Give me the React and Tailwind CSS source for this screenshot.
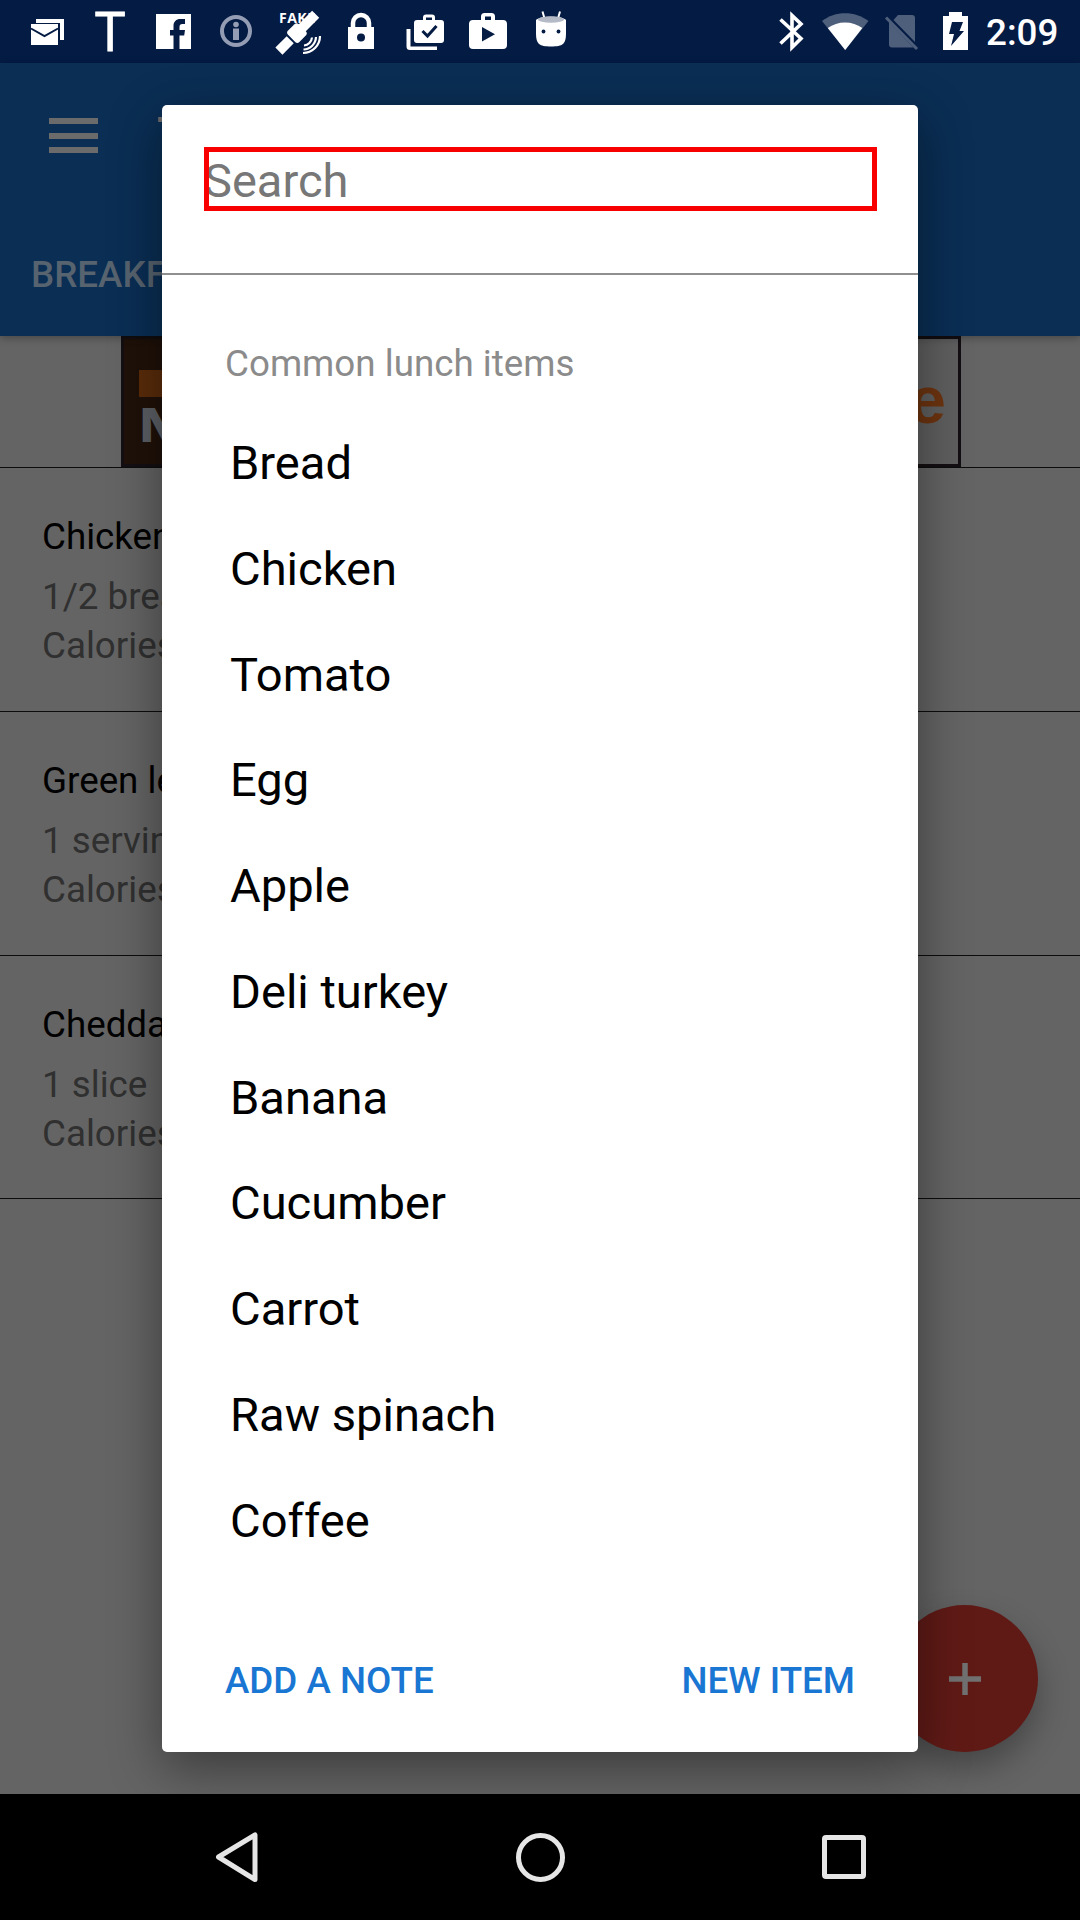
import React from "react";

const FOODS = ["Bread", "Chicken", "Tomato", "Egg", "Apple", "Deli turkey", "Banana", "Cucumber", "Carrot", "Raw spinach", "Coffee"];

const ENTRIES = [
  { name: "Chicken", amount: "1/2 breast" },
  { name: "Green leaf", amount: "1 serving" },
  { name: "Cheddar", amount: "1 slice" },
];

function Slot({ children, w = 63 }) {
  return (
    <svg width={w} height="63" viewBox={`0 0 ${w} 63`} className="shrink-0" fill="white">
      {children}
    </svg>
  );
}

function StatusBar() {
  return (
    <header className="flex h-[63px] items-center bg-[#041b44] pl-4 text-white">
      <Slot>
        <path d="M20 19h28v21h-4V23H20z" />
        <path d="M15 24h27v21H15z" />
        <path d="M15 28.500l13.500 7.500L42 28.500" fill="none" stroke="#041b44" strokeWidth="2" />
      </Slot>
      <Slot>
        <text x="31" y="51" textAnchor="middle" fontFamily="Open Sans" fontSize="54" stroke="white" strokeWidth="0.8">T</text>
      </Slot>
      <Slot>
        <path d="M14 14h35v35H37.500V35.500h4.700l.8-5.500h-5.500v-3c0-2 .8-3 3-3H43v-5h-4.500c-4.500 0-7 2.700-7 7v4H28v5.500h3.500V49H14z" />
      </Slot>
      <Slot>
        <circle cx="31" cy="31" r="14" fill="none" stroke="#949db4" strokeWidth="4" />
        <circle cx="31" cy="24.500" r="2.800" fill="#949db4" />
        <path d="M28 28.500h6v11.500h-6z" fill="#949db4" />
      </Slot>
      <Slot>
        <text x="11" y="23" fontFamily="Open Sans" fontWeight="700" fontSize="14" letterSpacing="0.5">FAKE</text>
        <g transform="rotate(-45 30 32)">
          <rect x="3" y="27" width="16" height="10" />
          <rect x="21" y="24" width="15" height="16" rx="3" />
          <rect x="35" y="27" width="20" height="10" />
        </g>
        <g fill="none" stroke="white" strokeWidth="2.200">
          <path d="M36 45.500a9 9 0 0 0 8-8" />
          <path d="M35.500 49.500a13 13 0 0 0 12.500-12.500" />
          <path d="M35 53a17 17 0 0 0 17-17" />
        </g>
      </Slot>
      <Slot>
        <path d="M22 29v-6a8 8 0 0 1 16 0v6" fill="none" stroke="white" strokeWidth="4.500" />
        <path d="M17 27h26v22H17z" />
        <circle cx="30" cy="37.500" r="4" fill="#041b44" />
      </Slot>
      <Slot>
        <path d="M12.500 29h4v17.500H43V50H16a3.500 3.500 0 0 1-3.500-3.500z" />
        <path d="M23 20h6v-2.500a3 3 0 0 1 3-3h6a3 3 0 0 1 3 3V20h6a3 3 0 0 1 3 3v17a3 3 0 0 1-3 3H23a3 3 0 0 1-3-3V23a3 3 0 0 1 3-3zm9 0h6v-2.500h-6z" fillRule="evenodd" />
        <path d="M28.500 31l5 5 9-10" fill="none" stroke="#041b44" strokeWidth="3" />
      </Slot>
      <Slot>
        <path d="M16 20h8v-3.500a3.500 3.500 0 0 1 3.500-3.500h7a3.500 3.500 0 0 1 3.500 3.500V20h8a4 4 0 0 1 4 4v21a4 4 0 0 1-4 4H16a4 4 0 0 1-4-4V24a4 4 0 0 1 4-4zm12 0h6v-3.500h-6z" fillRule="evenodd" />
        <path d="M25 27v14.500l13-7.250z" fill="#041b44" />
      </Slot>
      <Slot>
        <path d="M22.500 11.500l2 7M40 11.500l-2 7" stroke="white" strokeWidth="2" />
        <path d="M16 20c3-4.500 27-4.500 30 0v13c0 11-3 13.500-15 13.500S16 44 16 33z" />
        <ellipse cx="31" cy="19.500" rx="13" ry="3.200" fill="#b4bac6" />
        <circle cx="23.500" cy="31.500" r="1.900" fill="#041b44" />
        <circle cx="38.500" cy="31.500" r="1.900" fill="#041b44" />
      </Slot>
      <div className="ml-[181px] flex items-center">
        <Slot w={54}>
          <path d="M16.500 19.500L37 38.500 28 47.500V15.500l9 8.500-20.500 19.500" fill="none" stroke="white" strokeWidth="3.600" />
        </Slot>
        <Slot w={54}>
          <path d="M4 21c13-10.500 33-10.500 46.500 0L27.200 50z" fill="#4e5f7b" />
          <path d="M9.800 28c9.500-7.500 25-7.500 34.500 0L27.200 50z" />
        </Slot>
        <Slot w={58}>
          <path d="M26 15h14a3 3 0 0 1 3 3v24L21.500 20z" fill="#4e5f7b" />
          <path d="M17 22l24.500 25.500H20a3 3 0 0 1-3-3z" fill="#4e5f7b" />
          <path d="M14 17.500l31 31.500" stroke="#4e5f7b" strokeWidth="3" />
        </Slot>
        <Slot w={54}>
          <path d="M13 16h6v-4h13v4h6v34H13z" />
          <path d="M22 22h11L29.500 31H34L21 46l3-12h-5z" fill="#041b44" />
        </Slot>
        <span className="ml-[2px] pt-px text-[36.75px] font-medium leading-[63px]">2:09</span>
      </div>
    </header>
  );
}

function AppBar() {
  return (
    <div className="relative z-10 h-[273px] bg-[#0a2e54] shadow-[0_2px_8px_rgba(0,0,0,0.3)]">
      <div className="flex h-[147px] items-center pl-[49px]">
        <div className="mb-[2px] flex w-[49px] flex-col gap-[8.500px]">
          <i className="h-[6px] bg-[#6b6b6b]" />
          <i className="h-[6px] bg-[#6b6b6b]" />
          <i className="h-[6px] bg-[#6b6b6b]" />
        </div>
        <span className="ml-[59px] text-[52.5px] font-medium leading-none text-[#6b6b6b]">Today</span>
      </div>
      <div className="flex h-[126px] items-center pl-[31px] pt-[4px] text-[36.75px] font-medium text-[#57636f]">BREAKFAST</div>
    </div>
  );
}

function AdBanner() {
  return (
    <div className="ml-[121px] flex h-[131px] w-[840px] border-[3px] border-[#140f12] bg-[#5f5f5f] font-['Liberation_Sans'] font-bold">
      <div className="flex w-[260px] flex-col bg-[#1f1109] pl-[15px] pt-[31px]">
        <div className="h-[27px] w-[60px] bg-[#5a2c0a]" />
        <div className="mt-[8px] font-['Open_Sans'] text-[48px] font-extrabold leading-[38px] text-[#5c6066]">N</div>
      </div>
      <div className="flex-1 pr-[12px] pt-[23px] text-right text-[67px] leading-[76px] text-[#6d3410]">e</div>
    </div>
  );
}

function Diary() {
  return (
    <main className="h-[1458px] bg-[#646464]">
      <AdBanner />
      <ul className="border-t-[1.500px] border-[#0c0c0c]">
        {ENTRIES.map((e) => (
          <li key={e.name} className="h-[243.800px] border-b border-[#0c0c0c] pl-[42px] pt-[47px] text-[36.75px] text-black">
            <p className="leading-[44px]">{e.name}</p>
            <div className="mt-[13px] leading-[49px] text-[#303030]">
              <p>{e.amount}</p>
              <p>Calories</p>
            </div>
          </li>
        ))}
      </ul>
    </main>
  );
}

function NavBar() {
  return (
    <footer className="flex h-[126px] items-center bg-black pl-[213px]">
      <svg width="48" height="54" viewBox="0 0 48 54" fill="none" stroke="#e6e6e6" strokeWidth="5" strokeLinejoin="round">
        <path d="M42 5v44.500L5.500 27z" />
      </svg>
      <i className="ml-[255px] size-[49px] rounded-full border-[5.500px] border-[#e6e6e6]" />
      <i className="ml-[257px] size-[44px] rounded-[4px] border-[5px] border-[#e6e6e6]" />
    </footer>
  );
}

function FoodDialog() {
  return (
    <section className="absolute left-[162px] top-[105px] z-30 flex h-[1647px] w-[756px] flex-col rounded-[5px] bg-white shadow-[0_16px_52px_rgba(0,0,0,0.42)]">
      <div className="h-[170px] border-b-2 border-[#8f8f8f] px-[42px] pt-[42px]">
        <div className="relative h-[64px] w-[673px]">
          <span className="block pt-[3px] text-[47px] leading-[61px] text-[#777]">Search</span>
          <div className="absolute inset-0 border-[5px] border-[#f80000]" />
        </div>
      </div>
      <h2 className="mt-[67px] pl-[63px] text-[36.75px] leading-[44px] text-[#8b8b8b]">Common lunch items</h2>
      <ul className="mt-[24px] pl-[68px] text-[47.1px] leading-[105.75px] text-black">
        {FOODS.map((f) => (
          <li key={f}>{f}</li>
        ))}
      </ul>
      <div className="mt-[86px] flex justify-between px-[63px] text-[36.75px] font-medium leading-[44px] text-[#1976d2]">
        <button>ADD A NOTE</button>
        <button>NEW ITEM</button>
      </div>
    </section>
  );
}

export default function App() {
  return (
    <div className="relative h-[1920px] w-[1080px] overflow-hidden font-['Roboto',sans-serif]">
      <StatusBar />
      <AppBar />
      <Diary />
      <NavBar />
      <div className="absolute left-0 top-[63px] z-20 h-[1731px] w-[1080px] overflow-hidden">
        <div className="absolute left-[891px] top-[1542px] grid size-[147px] place-items-center rounded-full bg-[#601a16] shadow-[0_16px_32px_rgba(0,0,0,0.3)]">
          <svg width="34" height="34" viewBox="0 0 34 34" stroke="#717171" strokeWidth="5.500">
            <path d="M17 1v32M1 17h32" />
          </svg>
        </div>
      </div>
      <FoodDialog />
    </div>
  );
}
